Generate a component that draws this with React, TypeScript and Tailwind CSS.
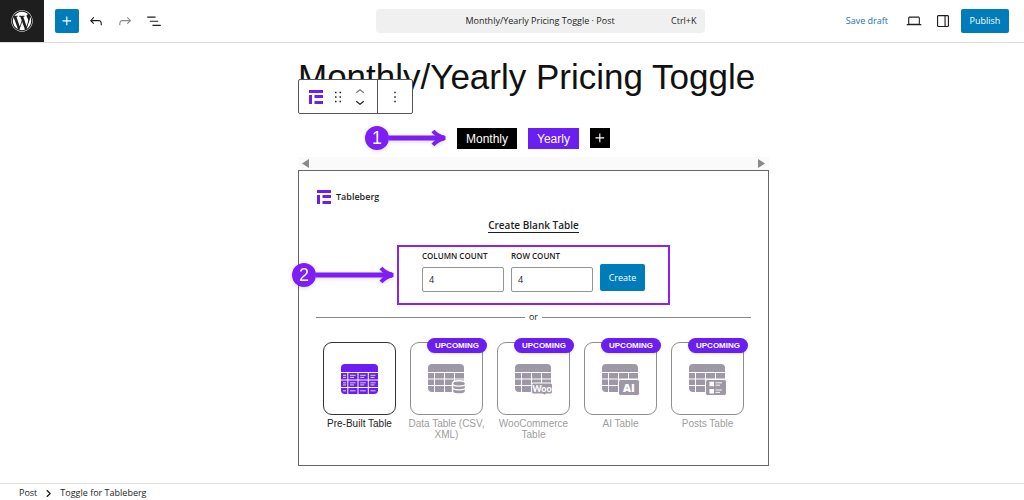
import React from "react";
import { FaWordpress } from "react-icons/fa";

const Icon = ({ d, className = "" }: { d: string; className?: string }) => (
  <svg viewBox="0 0 24 24" width="18" height="18" fill="currentColor" aria-hidden="true" className={className}>
    <path d={d} />
  </svg>
);

const icons = {
  plus: "M11 12.5V17.5H12.5V12.5H17.5V11H12.5V6H11V11H6V12.5H11Z",
  undo: "M18.3 11.7c-.6-.6-1.4-.9-2.3-.9H6.7l2.9-3.3-1.1-1-4.5 5L8.5 16l1-1-2.7-2.7H16c.5 0 .9.2 1.3.5 1 1 1 3.4 1 4.5v.3h1.5v-.2c0-1.5 0-4.3-1.5-5.7z",
  redo: "M15.6 6.5l-1.1 1 2.9 3.3H8c-.9 0-1.7.3-2.3.9-1.4 1.5-1.4 4.2-1.4 5.6v.2h1.5v-.3c0-1.1 0-3.5 1-4.5.3-.3.7-.5 1.3-.5h9.2L14.5 15l1.1 1.1 4.6-4.6-4.6-5z",
  list: "M3 6h11v1.5H3V6Zm3.5 5.5h11V13h-11v-1.5ZM21 17H10v1.5h11V17Z",
  desktop:
    "M20.5 16h-.7V8c0-1.1-.9-2-2-2H6.2c-1.1 0-2 .9-2 2v8h-.7c-.8 0-1.5.7-1.5 1.5h20c0-.8-.7-1.5-1.5-1.5zM5.7 8c0-.3.2-.5.5-.5h11.6c.3 0 .6.2.6.5v7.6H5.7V8z",
  sidebar:
    "M18 4H6c-1.1 0-2 .9-2 2v12c0 1.1.9 2 2 2h12c1.1 0 2-.9 2-2V6c0-1.1-.9-2-2-2zm-4 14.5H6c-.3 0-.5-.2-.5-.5V6c0-.3.2-.5.5-.5h8v13zm4.5-.5c0 .3-.2.5-.5.5h-2.5v-13H18c.3 0 .5.2.5.5v12z",
  drag: "M8 7h2V5H8v2zm0 6h2v-2H8v2zm0 6h2v-2H8v2zm6-14v2h2V5h-2zm0 8h2v-2h-2v2zm0 6h2v-2h-2v2z",
  more: "M13 19h-2v-2h2v2zm0-6h-2v-2h2v2zm0-6h-2V5h2v2z",
  up: "M6.5 12.4L12 8l5.5 4.4-.9 1.2L12 10l-4.5 3.6-1-1.2z",
  down: "M17.5 11.6L12 16l-5.5-4.4.9-1.2L12 14l4.5-3.6 1 1.2z",
};

const TablebergLogo = () => (
  <svg viewBox="0 0 14 14" width="14" height="14" fill="#6a1ff0" aria-hidden="true">
    <rect width="14" height="3" />
    <rect y="5" width="3" height="9" />
    <rect x="5.5" y="5" width="8.5" height="3" />
    <rect x="5.5" y="11" width="8.5" height="3" />
  </svg>
);

const PreBuiltIcon = () => (
  <svg viewBox="0 0 38 30" width="38" height="30" aria-hidden="true">
    <rect width="37" height="30" rx="4" fill="#6a1ff0" />
    <path d="M0 8.5h37M0 16h37M0 23.5h37M6.8 8.5V30M17 8.5V30M27.3 8.5V30" stroke="#fff" strokeWidth="1" />
    <path
      d="M2 11.3h3M2 13.4h3M9 11.3h5.5M9 13.4h4M19.2 11.3h5.5M19.2 13.4h4M29.5 11.3h5M29.5 13.4h4M2 18.8h3M2 20.9h3M9 18.8h5.5M9 20.9h4M19.2 18.8h5.5M19.2 20.9h4M29.5 18.8h5M29.5 20.9h4M2 26.8h3M9 26.8h5.5M19.2 26.8h5.5M29.5 26.8h5"
      stroke="#fff"
      strokeWidth=".8"
    />
  </svg>
);

const TableIcon = ({ children }: { children: React.ReactNode }) => (
  <svg viewBox="0 0 38 29" width="38" height="29" aria-hidden="true" className="overflow-visible">
    <rect width="36" height="28" rx="4" fill="#9e98a6" />
    <path d="M0 8.5h36M0 15h36M0 21.5h36M6.5 8.5V28M16.5 8.5V28M26.5 8.5V28" stroke="#fff" strokeWidth="1" />
    {children}
  </svg>
);

const DataIcon = () => (
  <TableIcon>
    <path
      d="M24.5 19.5c0-1.6 3-2.7 6.5-2.7s6.5 1.1 6.5 2.7v7.7c0 1.6-3 2.7-6.5 2.7s-6.5-1.1-6.5-2.7z"
      fill="#9e98a6"
      stroke="#fff"
      strokeWidth="1.4"
    />
    <path d="M24.5 19.8c0 3 13 3 13 0M24.5 23.6c0 3 13 3 13 0" fill="none" stroke="#fff" strokeWidth="1.2" />
  </TableIcon>
);

const WooIcon = () => (
  <TableIcon>
    <path
      d="M18.5 19h17a2 2 0 0 1 2 2v7a2 2 0 0 1-2 2h-5l1 2-4-2h-9a2 2 0 0 1-2-2v-7a2 2 0 0 1 2-2z"
      fill="#9e98a6"
      stroke="#fff"
      strokeWidth="1"
    />
    <text x="27" y="28" textAnchor="middle" fill="#fff" className="font-['Lato',sans-serif] text-[9px] font-black">
      Woo
    </text>
  </TableIcon>
);

const AiIcon = () => (
  <TableIcon>
    <rect x="16.5" y="15.5" width="21" height="16" rx="2" fill="#9e98a6" stroke="#fff" />
    <text x="27" y="28" textAnchor="middle" fill="#fff" className="font-['Open_Sans',sans-serif] text-[11px] font-extrabold">
      AI
    </text>
  </TableIcon>
);

const PostsIcon = () => (
  <TableIcon>
    <rect x="16.5" y="15.5" width="21" height="16" rx="2" fill="#9e98a6" stroke="#fff" />
    <path d="M20.5 17.8h4.5v4.5h-4.5zM20.5 25h4.5v4.5h-4.5z" fill="#fff" />
    <path d="M26.5 18.8h6.5M26.5 21.2h4.5M26.5 26h6.5M26.5 28.4h4.5" stroke="#fff" strokeWidth=".9" />
  </TableIcon>
);

const tables = [
  { label: "Pre-Built Table", icon: <PreBuiltIcon />, upcoming: false },
  { label: "Data Table (CSV, XML)", icon: <DataIcon />, upcoming: true },
  { label: "WooCommerce Table", icon: <WooIcon />, upcoming: true },
  { label: "AI Table", icon: <AiIcon />, upcoming: true },
  { label: "Posts Table", icon: <PostsIcon />, upcoming: true },
];

const Header = () => (
  <header className="grid grid-cols-[1fr_auto_1fr] items-center border-b border-[#dcdcdc] bg-white">
    <div className="flex items-center">
      <a href="#" aria-label="WordPress" className="flex h-[42px] w-11 items-center justify-center bg-[#1e1e1e] text-white">
        <FaWordpress size={22} />
      </a>
      <button aria-label="Add block" className="ml-[11px] flex size-6 items-center justify-center rounded-xs bg-[#007cba] text-white">
        <Icon d={icons.plus} />
      </button>
      <div className="ml-2 flex gap-[11px]">
        <button aria-label="Undo">
          <Icon d={icons.undo} />
        </button>
        <button aria-label="Redo" className="text-[#8c8c8c]">
          <Icon d={icons.redo} />
        </button>
        <button aria-label="Document overview">
          <Icon d={icons.list} />
        </button>
      </div>
    </div>
    <button className="ml-14 grid h-6 w-[329px] grid-cols-[1fr_auto_1fr] items-center rounded-sm bg-[#f0f0f0] px-2 text-[9px]">
      <span />
      <span>Monthly/Yearly Pricing Toggle · Post</span>
      <span className="text-right">Ctrl+K</span>
    </button>
    <div className="flex items-center justify-end pr-[15px]">
      <button className="text-[9px] text-[#2271b1]">Save draft</button>
      <button aria-label="View" className="ml-[17px]">
        <Icon d={icons.desktop} />
      </button>
      <button aria-label="Settings" className="ml-[11px]">
        <Icon d={icons.sidebar} />
      </button>
      <button className="ml-[9px] h-6 w-12 rounded-xs bg-[#007cba] text-[9px] text-white">Publish</button>
    </div>
  </header>
);

const BlockToolbar = () => (
  <div className="absolute top-6 left-0 flex h-[35px] rounded-xs border border-[#555] bg-white">
    <div className="flex items-center pr-2 pl-[10px]">
      <button aria-label="Tableberg">
        <TablebergLogo />
      </button>
      <button aria-label="Drag" className="ml-[6px]">
        <Icon d={icons.drag} />
      </button>
      <div className="ml-1 flex flex-col">
        <button aria-label="Move up" className="flex h-[10px] items-center text-[#757575]">
          <Icon d={icons.up} />
        </button>
        <button aria-label="Move down" className="flex h-[10px] items-center">
          <Icon d={icons.down} />
        </button>
      </div>
    </div>
    <button aria-label="Options" className="border-l border-[#555] px-2">
      <Icon d={icons.more} />
    </button>
  </div>
);

const Arrow = ({ step, length }: { step: string; length: number }) => (
  <div className="flex items-center text-[#7f1df5] drop-shadow-sm">
    <span className="flex size-6 items-center justify-center rounded-full bg-[#7f1df5] font-['Liberation_Sans',sans-serif] text-lg text-white">
      {step}
    </span>
    <svg width={length} height="18" fill="none" stroke="currentColor" aria-hidden="true">
      <path d={`M0 9h${length - 5}`} strokeWidth="5" />
      <path d={`M${length - 16} 2q4 5 12 7q-8 2-12 7`} strokeWidth="4" />
    </svg>
  </div>
);

const CountField = ({ id, label }: { id: string; label: string }) => (
  <div className="flex flex-col">
    <label htmlFor={id} className="text-[8px] leading-3 font-semibold uppercase">
      {label}
    </label>
    <input
      id={id}
      type="text"
      defaultValue="4"
      className="mt-[5px] h-[25px] w-[82px] rounded-xs border border-[#949494] bg-white px-[6px] text-[9px]"
    />
  </div>
);

const App = () => {
  return (
    <div className="flex min-h-screen flex-col bg-white font-['Open_Sans','Noto_Sans',sans-serif] text-[#1e1e1e]">
      <Header />
      <main className="flex-1 pt-3 pb-[17px] pl-[43px]">
        <div className="mx-auto max-w-[471px] font-['Liberation_Sans',Arial,sans-serif]">
          <div className="relative">
            <h1 className="text-[35px] leading-[44px] whitespace-nowrap text-[#111]">Monthly/Yearly Pricing Toggle</h1>
            <BlockToolbar />
          </div>

          <div className="relative mt-[29px] flex items-start justify-center gap-[11px] text-xs text-white">
            <div className="absolute top-[-2px] left-[67px]">
              <Arrow step="1" length={60} />
            </div>
            <button className="h-[21px] w-[60px] bg-black">Monthly</button>
            <button className="h-[21px] w-[51px] bg-[#6a1ff0]">Yearly</button>
            <button aria-label="Add tab" className="flex size-5 items-center justify-center bg-black">
              <Icon d={icons.plus} />
            </button>
          </div>

          <div className="mt-2 flex h-[13px] items-center justify-between bg-[#fafafa] px-1 text-[#8a8a8a]">
            <svg width="7" height="9" fill="currentColor" aria-hidden="true">
              <path d="M7 0v9L0 4.5z" />
            </svg>
            <svg width="7" height="9" fill="currentColor" aria-hidden="true">
              <path d="M0 0v9l7-4.5z" />
            </svg>
          </div>

          <section className="border border-[#666] px-[17px] pt-[18px] pb-[25px] font-['Open_Sans','Noto_Sans',sans-serif]">
            <div className="flex items-center gap-[5px] pl-px text-[9px] leading-4 font-semibold">
              <TablebergLogo />
              Tableberg
            </div>
            <h2 className="mx-auto mt-[14px] w-fit border-b border-[#1e1e1e] text-[10px] leading-[13px] font-semibold">
              Create Blank Table
            </h2>

            <div className="relative mt-3">
              <div className="absolute top-[18px] left-[-24px]">
                <Arrow step="2" length={81} />
              </div>
              <form className="mx-auto flex h-[60px] w-[273px] items-start gap-[7px] border-2 border-[#8a22f5] pt-[3px] pl-[23px]">
                <CountField id="columns" label="Column count" />
                <CountField id="rows" label="Row count" />
                <button type="button" className="mt-[14px] h-[27px] w-[45px] rounded-xs bg-[#007cba] text-[9px] text-white">
                  Create
                </button>
              </form>
            </div>

            <div className="mt-[6px] flex items-center gap-1 text-[9px] leading-3">
              <hr className="flex-1 border-[#888]" />
              or
              <hr className="flex-1 border-[#888]" />
            </div>

            <ul className="mt-[19px] flex justify-center gap-[14px] font-['Liberation_Sans',Arial,sans-serif]">
              {tables.map((table) => (
                <li key={table.label} className="relative w-[73px]">
                  <button
                    disabled={table.upcoming}
                    className={table.upcoming ? "block w-full text-[#9d9d9d]" : "block w-full text-[#1e1e1e]"}
                  >
                    <span
                      className={
                        table.upcoming
                          ? "flex h-[73px] items-center justify-center rounded-[9px] border border-[#8e8e8e]"
                          : "flex h-[73px] items-center justify-center rounded-[9px] border border-[#333]"
                      }
                    >
                      {table.icon}
                    </span>
                    <span className="-mx-1 mt-[3px] block h-[22px] text-[10px] leading-[11px]">{table.label}</span>
                  </button>
                  {table.upcoming && (
                    <span className="absolute top-[-4px] left-[17px] h-[15px] w-[60px] rounded-full bg-[#6a1ff0] text-center text-[8px] leading-[15px] font-bold text-white shadow">
                      UPCOMING
                    </span>
                  )}
                </li>
              ))}
            </ul>
          </section>
        </div>
      </main>
      <footer className="flex h-[17px] items-center border-t border-[#e0e0e0] bg-white pt-[2px] pl-[19px] text-[9px] leading-3">
        <a href="#">Post</a>
        <svg viewBox="0 0 6 8" width="5" height="7" fill="none" stroke="currentColor" strokeWidth="1.6" aria-hidden="true" className="mr-[9px] ml-[9px]">
          <path d="M1 0l4 4-4 4" />
        </svg>
        <span>Toggle for Tableberg</span>
      </footer>
    </div>
  );
};

export default App;
